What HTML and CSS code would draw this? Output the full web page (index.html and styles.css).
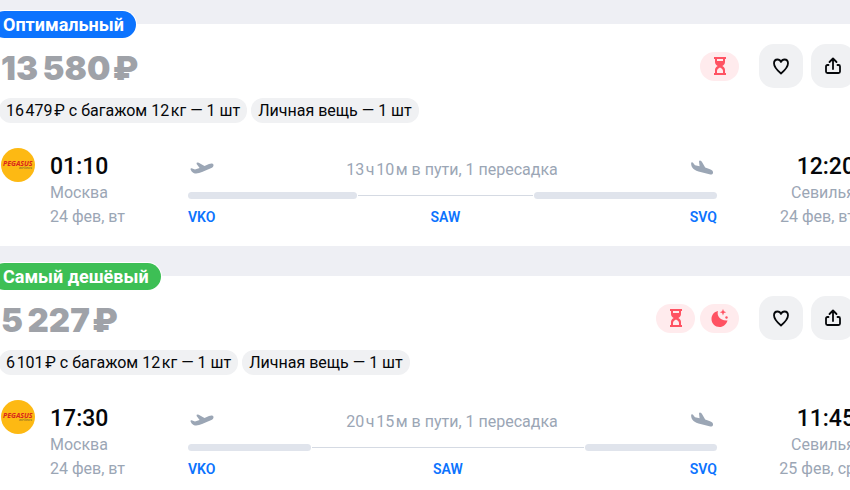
FILE: index.html
```html
<!DOCTYPE html>
<html lang="ru">
<head>
  <meta charset="UTF-8" />
  <meta name="viewport" content="width=device-width, initial-scale=1" />
  <title>Билеты Москва - Севилья</title>
  <link rel="stylesheet" href="styles.css">
</head>
<body>

<!-- shared icons -->
<svg class="sprite" aria-hidden="true">
  <symbol id="icon-hourglass" viewBox="0 0 14 18">
    <path fill-rule="evenodd" d="M1 0h12v2h-1v3c0 1.800-1 3-2.700 4C11 10 12 11.200 12 13v3h1v2H1v-2h1v-3c0-1.800 1-3 2.700-4C3 8 2 6.800 2 5V2H1zM4 2v2h6V2zM7 10.400C5.200 11.200 4 12.200 4 14v2h6v-2c0-1.800-1.200-2.800-3-3.600z"/>
  </symbol>
  <symbol id="icon-moon" viewBox="0 0 18 18">
    <path d="M7 2C5.600 6.200 8.600 12 16.500 11.500C15.300 15.400 12.300 18 8.600 18C4.100 18 .5 14.500.5 10C.5 6 3 2.800 7 2z"/>
    <path d="M12 0l.9 2.300 2.300.9-2.300.9L12 6.400l-.9-2.300-2.300-.9 2.300-.9z"/>
    <circle cx="15.500" cy="8.500" r="1.200"/>
  </symbol>
  <symbol id="icon-heart" viewBox="0 0 20 20">
    <path fill="none" stroke="currentColor" stroke-width="1.800" stroke-linejoin="round" d="M10 17.500C6 14.200 3 11 3 7.300C3 5 4.500 3.500 6.500 3.500C8.200 3.500 9.400 4.500 10 6C10.600 4.500 11.800 3.500 13.500 3.500C15.500 3.500 17 5 17 7.300C17 11 14 14.200 10 17.500z"/>
  </symbol>
  <symbol id="icon-share" viewBox="0 0 20 20">
    <path fill="none" stroke="currentColor" stroke-width="1.800" stroke-linecap="round" stroke-linejoin="round" d="M10 13V3M6.500 6L10 2.500L13.500 6M5.500 9H4.500Q3 9 3 10.500V15.500Q3 17 4.500 17H15.500Q17 17 17 15.500V10.500Q17 9 15.500 9H14.500"/>
  </symbol>
  <symbol id="icon-takeoff" viewBox="0 0 24 14">
    <path d="M.5 8.200Q.4 7.200 1.600 7.300L5 8.600L9.600 7L6.600 3Q6.200 1.600 7.800 1.600Q8.800 1.600 9.600 2.200L14.500 4.900L19 3C21.600 1.900 23.300 2.400 23.500 3.900C23.700 5.400 22.500 6.500 20.800 7.200L12 11C9 12.300 5.800 12.900 3.600 11.900C2.200 11.200 1 9.700.5 8.200z"/>
  </symbol>
  <symbol id="icon-landing" viewBox="0 0 24 16">
    <path d="M1.200 2.800Q1.600 1.800 2.800 2.600L5 5.200L9.600 6.300L9 1.600Q9.200.3 10.600.7Q11.600 1 12 1.900L15.200 7.600L20 9.200C22.300 10 23.400 11.400 23 13C22.600 14.500 21 14.700 19.400 14.300L8.500 11.500C5.500 10.700 3.400 9.400 2.300 7.600C1.400 6.200 1 4.300 1.200 2.800z"/>
  </symbol>
  <symbol id="logo-pegasus" viewBox="0 0 34 34">
    <circle cx="17" cy="17" r="17" fill="#fdb913"/>
    <text x="2" y="18" class="logo-name">PEGASUS</text>
    <text x="18" y="21" class="logo-sub">airlines</text>
  </symbol>
</svg>

<main class="feed">

  <article class="ticket">
    <div class="badge badge-best">Оптимальный</div>
    <header class="ticket-head">
      <div class="price">13&#8201;580&#8202;₽</div>
      <div class="tags">
        <span class="tag"><svg class="tag-icon" role="img" aria-label="Долгая пересадка"><use href="#icon-hourglass"/></svg></span>
      </div>
      <div class="actions">
        <button class="action" type="button" aria-label="В избранное"><svg><use href="#icon-heart"/></svg></button>
        <button class="action" type="button" aria-label="Поделиться"><svg><use href="#icon-share"/></svg></button>
      </div>
    </header>
    <div class="baggage">
      <span class="pill">16&#8202;479&#8202;₽ с багажом 12&#8202;кг — 1 шт</span>
      <span class="pill">Личная вещь — 1 шт</span>
    </div>
    <div class="flight">
      <svg class="airline" role="img" aria-label="Pegasus Airlines"><use href="#logo-pegasus"/></svg>
      <div class="point">
        <div class="time">01:10</div>
        <div class="info">Москва</div>
        <div class="info">24 фев, вт</div>
      </div>
      <div class="route">
        <div class="route-head">
          <svg class="plane"><use href="#icon-takeoff"/></svg>
          <span>13&#8202;ч&#8202;10&#8202;м в пути, 1 пересадка</span>
          <svg class="plane"><use href="#icon-landing"/></svg>
        </div>
        <div class="legs" style="grid-template-columns: 169fr 177fr 183fr">
          <span class="leg"></span>
          <span class="layover"></span>
          <span class="leg"></span>
          <span class="code">VKO</span>
          <span class="code">SAW</span>
          <span class="code">SVQ</span>
        </div>
      </div>
      <div class="point point-end">
        <div class="time">12:20</div>
        <div class="info">Севилья</div>
        <div class="info">24 фев, вт</div>
      </div>
    </div>
  </article>

  <article class="ticket">
    <div class="badge badge-cheap">Самый дешёвый</div>
    <header class="ticket-head">
      <div class="price">5&#8201;227&#8202;₽</div>
      <div class="tags">
        <span class="tag"><svg class="tag-icon" role="img" aria-label="Долгая пересадка"><use href="#icon-hourglass"/></svg></span>
        <span class="tag"><svg class="tag-icon" role="img" aria-label="Ночная пересадка"><use href="#icon-moon"/></svg></span>
      </div>
      <div class="actions">
        <button class="action" type="button" aria-label="В избранное"><svg><use href="#icon-heart"/></svg></button>
        <button class="action" type="button" aria-label="Поделиться"><svg><use href="#icon-share"/></svg></button>
      </div>
    </header>
    <div class="baggage">
      <span class="pill">6&#8202;101&#8202;₽ с багажом 12&#8202;кг — 1 шт</span>
      <span class="pill">Личная вещь — 1 шт</span>
    </div>
    <div class="flight">
      <svg class="airline" role="img" aria-label="Pegasus Airlines"><use href="#logo-pegasus"/></svg>
      <div class="point">
        <div class="time">17:30</div>
        <div class="info">Москва</div>
        <div class="info">24 фев, вт</div>
      </div>
      <div class="route">
        <div class="route-head">
          <svg class="plane"><use href="#icon-takeoff"/></svg>
          <span>20&#8202;ч&#8202;15&#8202;м в пути, 1 пересадка</span>
          <svg class="plane"><use href="#icon-landing"/></svg>
        </div>
        <div class="legs" style="grid-template-columns: 123fr 274fr 132fr">
          <span class="leg"></span>
          <span class="layover"></span>
          <span class="leg"></span>
          <span class="code">VKO</span>
          <span class="code">SAW</span>
          <span class="code">SVQ</span>
        </div>
      </div>
      <div class="point point-end">
        <div class="time">11:45</div>
        <div class="info">Севилья</div>
        <div class="info">25 фев, ср</div>
      </div>
    </div>
  </article>

</main>

</body>
</html>
```
FILE: styles.css
```css
* {
  box-sizing: border-box;
}
body {
  margin: 0;
  background-color: #eeeff4;
  color: #05070a;
  font-family: Roboto, sans-serif;
  font-size: 16px;
  line-height: 24px;
  overflow: hidden;
}
.sprite {
  display: none;
}
/* the feed runs past both edges of the window */
.feed {
  display: flex;
  flex-direction: column;
  gap: 30px;
  margin: 0 -21px 0 -15px;
  padding-top: 24px;
}
.ticket {
  background: white;
  padding: 0 16px 17px;
}
.badge {
  width: fit-content;
  margin: -13px 0 0 -10px;
  padding: 0 12px;
  border-radius: 14px;
  box-shadow: 0 0 0 1px white;
  color: white;
  font-size: 18px;
  font-weight: 700;
  line-height: 27px;
}
.badge-best {
  background-color: #0c73fe;
}
.badge-cheap {
  background-color: #3dbf55;
}
.ticket-head {
  display: flex;
  align-items: center;
  margin-top: 6px;
}
.price {
  flex: 1;
  padding-top: 4px;
  color: #9fa2a8;
  font-family: Inter, sans-serif;
  font-size: 33px;
  font-weight: 900;
  line-height: 40px;
}
.tags {
  display: flex;
  gap: 5px;
  margin-right: 20px;
}
.tag {
  display: flex;
  align-items: center;
  justify-content: center;
  width: 39px;
  height: 29px;
  border-radius: 15px;
  background-color: #ffebed;
}
.tag-icon {
  width: 18px;
  height: 18px;
  fill: #ff5262;
}
.actions {
  display: flex;
  gap: 8px;
}
.action {
  display: flex;
  align-items: center;
  justify-content: center;
  width: 44px;
  height: 44px;
  padding: 0;
  border: none;
  border-radius: 15px;
  background-color: #f0f1f3;
  color: #05070a;
  cursor: pointer;
}
.action svg {
  width: 20px;
  height: 20px;
}
.baggage {
  display: flex;
  gap: 4px;
  margin: 10px 0 0 -2px;
}
.pill {
  padding: 1px 7px 0;
  border-radius: 12px;
  background-color: #f0f1f3;
}
.flight {
  display: grid;
  grid-template-columns: 34px 153px 1fr 138px;
  align-items: start;
  margin-top: 25px;
}
.airline {
  width: 34px;
  height: 34px;
}
.logo-name {
  fill: #d9251c;
  font-family: "Noto Sans", sans-serif;
  font-size: 7px;
  font-style: italic;
  font-weight: 700;
}
.logo-sub {
  fill: #6b5a2a;
  font-family: "Noto Sans", sans-serif;
  font-size: 4px;
  font-style: italic;
}
.point {
  padding: 4px 0 0 15px;
}
.point-end {
  padding-left: 0;
  text-align: right;
}
.time {
  font-size: 23px;
  font-weight: 500;
  line-height: 29px;
}
.info {
  color: #9ba6b5;
}
.route {
  padding-top: 10px;
}
.route-head {
  display: flex;
  justify-content: space-between;
  padding: 0 3px 0 2px;
  color: #9ba6b5;
}
.plane {
  width: 24px;
  height: 20px;
  fill: #9ba6b5;
}
.legs {
  display: grid;
  row-gap: 6px;
  align-items: center;
  margin-top: 10px;
}
.leg {
  height: 7px;
  border-radius: 4px;
  background-color: #e0e4ec;
}
.layover {
  height: 1px;
  margin: 0 1px;
  background-color: #d5dae3;
}
.code {
  color: #0c73fe;
  font-size: 14px;
  font-weight: 600;
  text-align: center;
}
.code:nth-child(4) {
  text-align: left;
}
.code:last-child {
  text-align: right;
}
```
